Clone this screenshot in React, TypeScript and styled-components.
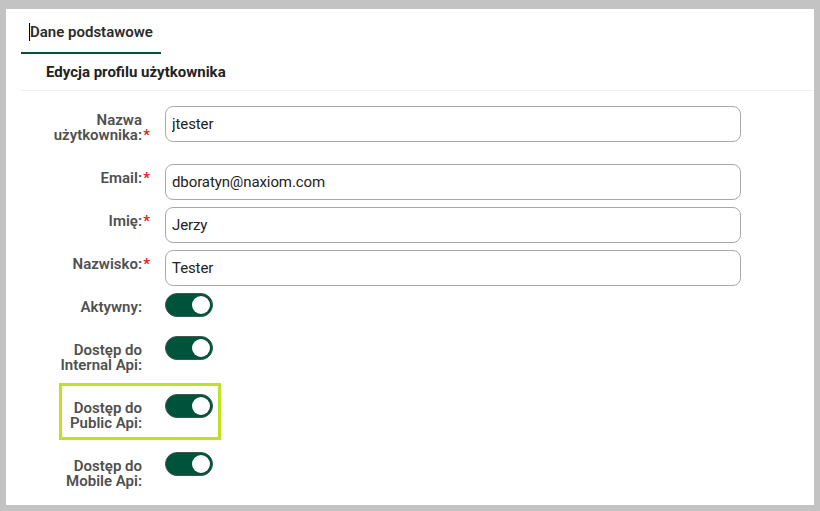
import React from "react";
import styled, { createGlobalStyle } from "styled-components";

const Global = createGlobalStyle`
  html, body { margin: 0; padding: 0; }
  body {
    background: #c3c3c3;
    font-family: Roboto, "Liberation Sans", Arial, sans-serif;
    height: 511px;
    overflow: hidden;
  }
  * { box-sizing: border-box; }
`;

const Page = styled.div`
  height: 511px;
  padding: 9px 6px 6px 6px;
  display: flex;
`;

const Panel = styled.div`
  flex: 1;
  background: #fff;
  overflow: hidden;
  padding-left: 15px;
  display: flex;
  flex-direction: column;
`;

const TabBar = styled.div`
  display: flex;
`;

const Tab = styled.div<{ $active?: boolean }>`
  padding: 14px 8px 11px 8px;
  border-bottom: 2px solid ${(p) => (p.$active ? "#00523a" : "transparent")};
  font-size: 15px;
  font-weight: 600;
  line-height: 18px;
  color: #2b2b2b;
  display: flex;
`;

const TabText = styled.span`
  border-left: 1px solid #000;
`;

const SectionHeader = styled.div`
  padding-left: 25px;
  line-height: 36px;
  font-size: 15px;
  font-weight: 700;
  color: #222;
  border-bottom: 1px solid #f1f1f1;
`;

const Form = styled.div`
  padding: 15px 73px 0 29px;
  display: flex;
  flex-direction: column;
  gap: 7px;
`;

const Row = styled.div`
  position: relative;
  display: flex;
  align-items: flex-start;
  gap: 15px;
`;

const Label = styled.label`
  width: 100px;
  flex: none;
  text-align: right;
  padding: 7px 8px 14px 0;
  font-size: 15px;
  font-weight: 600;
  line-height: 15px;
  color: #505050;
`;

const Req = styled.span`
  color: #e0201b;
  margin-right: -8px;
  display: inline-block;
  width: 8px;
  text-align: right;
`;

const Input = styled.input`
  flex: 1;
  min-width: 0;
  height: 36px;
  border: 1px solid #a9a9a9;
  border-radius: 8px;
  padding: 0 6px;
  font-family: Roboto, "Liberation Sans", Arial, sans-serif;
  font-size: 15px;
  letter-spacing: -0.1px;
  color: #222;
  background: #fff;
  outline: none;
`;

const Toggle = styled.div<{ $on?: boolean }>`
  width: 48px;
  height: 24px;
  border-radius: 12px;
  background: ${(p) => (p.$on ? "#00533b" : "#ccc")};
  border: 1px solid #3c5a4c;
  display: flex;
  align-items: center;
  justify-content: ${(p) => (p.$on ? "flex-end" : "flex-start")};
  padding: 0 2px;
  flex: none;
`;

const Knob = styled.div`
  width: 18px;
  height: 18px;
  border-radius: 50%;
  background: #fff;
`;

const Highlight = styled.div`
  position: absolute;
  left: 9px;
  top: -11px;
  width: 162px;
  height: 57px;
  border: 3px solid #bde21f;
  pointer-events: none;
`;

type Field = { label: string; value: string; required?: boolean };

const fields: Field[] = [
  { label: "Nazwa użytkownika:", value: "jtester", required: true },
  { label: "Email:", value: "dboratyn@naxiom.com", required: true },
  { label: "Imię:", value: "Jerzy", required: true },
  { label: "Nazwisko:", value: "Tester", required: true },
];

const toggles: { label: string; highlight?: boolean }[] = [
  { label: "Aktywny:" },
  { label: "Dostęp do Internal Api:" },
  { label: "Dostęp do Public Api:", highlight: true },
  { label: "Dostęp do Mobile Api:" },
];

export default function App() {
  return (
    <>
      <Global />
      <Page>
        <Panel>
          <TabBar>
            <Tab $active>
              <TabText>Dane podstawowe</TabText>
            </Tab>
          </TabBar>
          <SectionHeader>Edycja profilu użytkownika</SectionHeader>
          <Form>
            {fields.map((f) => (
              <Row key={f.label}>
                <Label>
                  {f.label}
                  {f.required && <Req>*</Req>}
                </Label>
                <Input defaultValue={f.value} />
              </Row>
            ))}
            {toggles.map((t) => (
              <Row key={t.label}>
                <Label>{t.label}</Label>
                <Toggle $on>
                  <Knob />
                </Toggle>
                {t.highlight && <Highlight />}
              </Row>
            ))}
          </Form>
        </Panel>
      </Page>
    </>
  );
}
